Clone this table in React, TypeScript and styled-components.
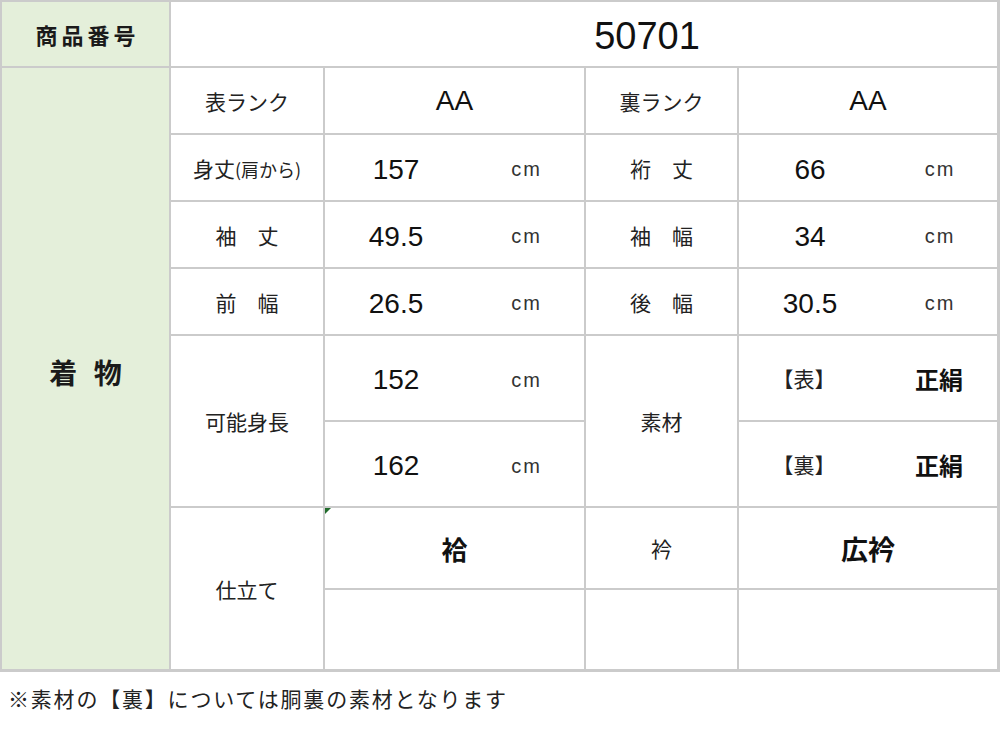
import React from "react";
import styled, { createGlobalStyle, css } from "styled-components";

const Global = createGlobalStyle`
  html, body {
    margin: 0;
    padding: 0;
    background: #ffffff;
  }
  body {
    font-family: "Liberation Sans", "Noto Sans CJK JP", sans-serif;
    color: #1a1a1a;
  }
`;

const Page = styled.div`
  width: 1000px;
  display: flex;
  flex-direction: column;
`;

const Sheet = styled.div`
  display: grid;
  grid-template-columns: 167px 152px 259px 151px 258px;
  grid-template-rows: 64px 65px 65px 65px 65px 84px 84px 80px 79px;
  gap: 2px;
  padding: 2px 3px 3px 2px;
  background: #cbcbcb;
  width: max-content;
`;

type CellProps = {
  $c: number;
  $r: number;
  $cs?: number;
  $rs?: number;
  $green?: boolean;
  $marker?: boolean;
  $pl?: number;
};

const Cell = styled.div<CellProps>`
  grid-column: ${(p) => p.$c} / span ${(p) => p.$cs ?? 1};
  grid-row: ${(p) => p.$r} / span ${(p) => p.$rs ?? 1};
  background: ${(p) => (p.$green ? "#e4efda" : "#ffffff")};
  display: flex;
  align-items: center;
  justify-content: center;
  position: relative;
  padding-left: ${(p) => p.$pl ?? 0}px;
  ${(p) =>
    p.$marker &&
    css`
      &::before {
        content: "";
        position: absolute;
        left: 0;
        top: 0;
        width: 0;
        height: 0;
        border-top: 6px solid #1f6b2a;
        border-right: 6px solid transparent;
      }
    `}
`;

const HeadLabel = styled.span`
  font-family: "Noto Sans CJK JP", sans-serif;
  font-size: 22px;
  font-weight: 700;
  letter-spacing: 4px;
  margin-left: 4px;
  color: #1a1a1a;
`;

const BigNumber = styled.span`
  font-family: "Liberation Sans", sans-serif;
  font-size: 38px;
  color: #111;
  margin-top: 4px;
`;

const SideLabel = styled.span`
  font-family: "Noto Sans CJK JP", sans-serif;
  font-size: 28px;
  font-weight: 700;
  word-spacing: 10px;
  color: #1a1a1a;
  margin-top: 6px;
`;

const Label = styled.span`
  font-family: "Noto Sans CJK JP", sans-serif;
  font-size: 21px;
  color: #222;
  white-space: pre;
`;

const Small = styled.span`
  font-size: 18px;
`;

const Rank = styled.span`
  font-family: "Liberation Sans", sans-serif;
  font-size: 28px;
  color: #111;
`;

const Measure = styled.div`
  width: 100%;
  align-self: stretch;
  display: grid;
  grid-template-columns: 142px 1fr;
  align-items: center;
  justify-items: center;
`;

const Num = styled.span`
  font-family: "Liberation Sans", sans-serif;
  font-size: 28px;
  color: #111;
  margin-top: 4px;
`;

const Unit = styled.span`
  font-family: "Liberation Sans", sans-serif;
  font-size: 20px;
  letter-spacing: 2px;
  color: #333;
  margin-top: 4px;
  margin-left: 2px;
`;

const Bracket = styled.span`
  font-family: "Noto Sans CJK JP", sans-serif;
  font-size: 21px;
  color: #222;
  margin-left: -12px;
`;

const Strong = styled.span<{ $size?: number }>`
  font-family: "Noto Sans CJK JP", sans-serif;
  font-size: ${(p) => p.$size ?? 23}px;
  font-weight: 700;
  color: #111;
`;

const Note = styled.p`
  margin: 12px 0 0 8px;
  font-family: "Noto Sans CJK JP", sans-serif;
  font-size: 21px;
  letter-spacing: 1.8px;
  line-height: 29px;
  color: #222;
`;

type M = { label: React.ReactNode; value: string; rlabel: string; rvalue: string };

const measures: M[] = [
  { label: <>身丈<Small>(肩から)</Small></>, value: "157", rlabel: "裄　丈", rvalue: "66" },
  { label: "袖　丈", value: "49.5", rlabel: "袖　幅", rvalue: "34" },
  { label: "前　幅", value: "26.5", rlabel: "後　幅", rvalue: "30.5" },
];

const MeasureValue = ({ n, unit = "cm" }: { n: string; unit?: string }) => (
  <Measure>
    <Num>{n}</Num>
    <Unit>{unit}</Unit>
  </Measure>
);

const Material = ({ side }: { side: string }) => (
  <Measure>
    <Bracket>{`【${side}】`}</Bracket>
    <Strong $size={24}>正絹</Strong>
  </Measure>
);

export default function App() {
  return (
    <Page>
      <Global />
      <Sheet>
        <Cell $c={1} $r={1} $green>
          <HeadLabel>商品番号</HeadLabel>
        </Cell>
        <Cell $c={2} $r={1} $cs={4} $pl={126}>
          <BigNumber>50701</BigNumber>
        </Cell>

        <Cell $c={1} $r={2} $rs={8} $green>
          <SideLabel>着 物</SideLabel>
        </Cell>

        <Cell $c={2} $r={2}>
          <Label>表ランク</Label>
        </Cell>
        <Cell $c={3} $r={2}>
          <Rank>AA</Rank>
        </Cell>
        <Cell $c={4} $r={2}>
          <Label>裏ランク</Label>
        </Cell>
        <Cell $c={5} $r={2}>
          <Rank>AA</Rank>
        </Cell>

        {measures.map((m, i) => (
          <React.Fragment key={i}>
            <Cell $c={2} $r={3 + i}>
              <Label>{m.label}</Label>
            </Cell>
            <Cell $c={3} $r={3 + i}>
              <MeasureValue n={m.value} />
            </Cell>
            <Cell $c={4} $r={3 + i}>
              <Label>{m.rlabel}</Label>
            </Cell>
            <Cell $c={5} $r={3 + i}>
              <MeasureValue n={m.rvalue} />
            </Cell>
          </React.Fragment>
        ))}

        <Cell $c={2} $r={6} $rs={2}>
          <Label>可能身長</Label>
        </Cell>
        <Cell $c={3} $r={6}>
          <MeasureValue n="152" />
        </Cell>
        <Cell $c={3} $r={7}>
          <MeasureValue n="162" />
        </Cell>
        <Cell $c={4} $r={6} $rs={2}>
          <Label>素材</Label>
        </Cell>
        <Cell $c={5} $r={6}>
          <Material side="表" />
        </Cell>
        <Cell $c={5} $r={7}>
          <Material side="裏" />
        </Cell>

        <Cell $c={2} $r={8} $rs={2}>
          <Label>仕立て</Label>
        </Cell>
        <Cell $c={3} $r={8} $marker>
          <Strong $size={26}>袷</Strong>
        </Cell>
        <Cell $c={3} $r={9} />
        <Cell $c={4} $r={8}>
          <Label>衿</Label>
        </Cell>
        <Cell $c={4} $r={9} />
        <Cell $c={5} $r={8}>
          <Strong $size={27}>広衿</Strong>
        </Cell>
        <Cell $c={5} $r={9} />
      </Sheet>
      <Note>※素材の【裏】については胴裏の素材となります</Note>
    </Page>
  );
}
